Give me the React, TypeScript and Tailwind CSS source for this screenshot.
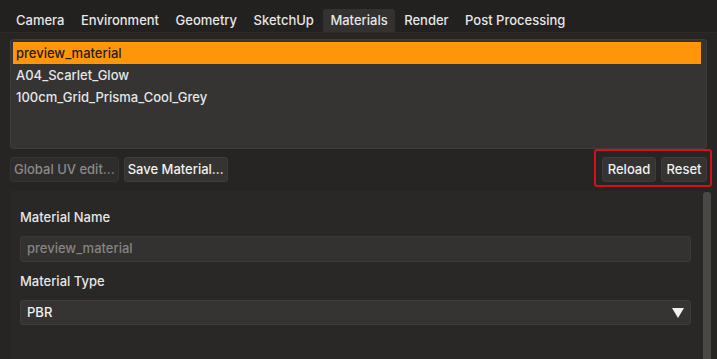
import React from 'react';

const tabs = ['Camera', 'Environment', 'Geometry', 'SketchUp', 'Materials', 'Render', 'Post Processing'];
const materials = ['preview_material', 'A04_Scarlet_Glow', '100cm_Grid_Prisma_Cool_Grey'];

const App = () => {
  return (
    <div
      className="w-[717px] h-[359px] overflow-hidden bg-[#262524] text-[13px] font-medium text-[#e6e6e6] flex flex-col"
      style={{ fontFamily: 'Inter, Roboto, "Noto Sans", sans-serif' }}
    >
      {/* Tab bar */}
      <div className="h-[33px] flex items-end pl-[9px] gap-[2.5px] bg-[#222120] border-b border-[#2c2b2a]">
        {tabs.map((tab) => (
          <div
            key={tab}
            className={`h-[23px] px-[7px] pt-[1px] flex items-center rounded-t-[3px] ${
              tab === 'Materials' ? 'bg-[#333231]' : ''
            }`}
          >
            {tab}
          </div>
        ))}
      </div>

      {/* Material list */}
      <div className="mx-[10px] mt-[6px] h-[110px] bg-[#353433] border border-[#3d3c3b] rounded-[3px] p-[2px] pr-[5px]">
        {materials.map((m, i) => (
          <div
            key={m}
            className={`h-[22px] pl-[3px] pt-[1px] flex items-center ${
              i === 0 ? 'bg-[#ff9508] text-[#1e1e1e]' : ''
            }`}
          >
            {m}
          </div>
        ))}
      </div>

      {/* Buttons */}
      <div className="mx-[10px] flex items-start">
        <div className="flex gap-[5px] mt-[8px]">
          <button className="h-[25px] px-[3px] rounded-[3px] bg-[#2e2d2c] border border-[#353433] text-[#8a8988]">
            Global UV edit…
          </button>
          <button className="h-[25px] px-[3px] rounded-[3px] bg-[#353433] border border-[#3d3c3b] text-[#f0f0f0]">
            Save Material…
          </button>
        </div>
        <div className="ml-auto -mr-[5px] flex gap-[5px] pl-[6px] pr-[3px] pt-[6px] pb-[3px] border-[2px] border-[#d0121b] rounded-[3px]">
          <button className="h-[25px] w-[54px] rounded-[3px] bg-[#353433] border border-[#3d3c3b] text-[#f0f0f0]">
            Reload
          </button>
          <button className="h-[25px] w-[46px] rounded-[3px] bg-[#353433] border border-[#3d3c3b] text-[#f0f0f0]">
            Reset
          </button>
        </div>
      </div>

      {/* Properties panel */}
      <div className="flex-1 flex ml-[10px] mr-[6px] mt-[4px] min-h-0">
        <div className="flex-1 bg-[#292827] pl-[10px] pr-[12px] pt-[18px]">
          <div className="text-[#e6e6e6] leading-[16px]">Material Name</div>
          <div className="mt-[11px] h-[26px] rounded-[3px] bg-[#333231] border border-[#3a3938] flex items-center px-[6px] text-[#858483]">
            preview_material
          </div>
          <div className="mt-[11px] text-[#e6e6e6] leading-[16px]">Material Type</div>
          <div className="mt-[11px] h-[25px] rounded-[3px] bg-[#353433] border border-[#3d3c3b] flex items-center px-[6px] text-[#f0f0f0]">
            <span>PBR</span>
            <svg className="ml-auto" width="12" height="10" viewBox="0 0 12 10">
              <polygon points="0,0 12,0 6,10" fill="#f0f0f0" />
            </svg>
          </div>
        </div>
        <div className="w-[8px] mt-[1px] bg-[#4a4946] rounded-t-[3px]" />
      </div>
    </div>
  );
};

export default App;
